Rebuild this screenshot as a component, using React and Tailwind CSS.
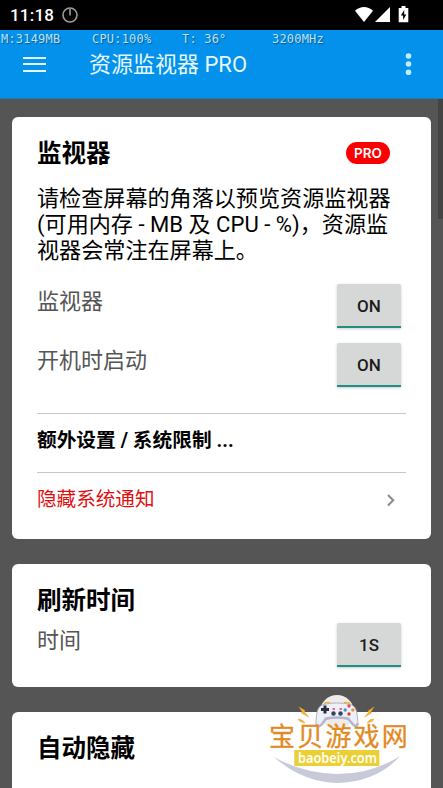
const StatusBar = () => {
	return (
		<div className="h-[30px] bg-black flex items-center justify-between pl-[10px] pr-[33px] text-white">
			<div className="flex items-center gap-[8px]">
				<span className="text-[17px] leading-[30px] font-medium tracking-[0.2px] w-[44px] whitespace-nowrap">11:18</span>
				<svg width="16" height="16" viewBox="0 0 16 16" fill="none" stroke="#a09c98" strokeWidth="1.6">
					<circle cx="8" cy="8" r="7" />
					<path d="M8 2v6.5" />
				</svg>
			</div>
			<svg width="56" height="18" viewBox="0 0 56 18" fill="#fff">
				<path d="M1 4.7C6.500 -.2 13.500 -.2 19 4.700L10 16z" />
				<path d="M36 1v15H21z" />
				<path d="M47.500 0h4v2h2.800v14.200h-9.600V2h2.800z" />
				<path d="M50.200 4l-3.300 5.500h2.200V14l3.200-5.600h-2.100z" fill="#000" />
			</svg>
		</div>
	);
};

const AppBar = () => {
	return (
		<header className="h-[69px] bg-[#0491eb] border-b border-[#2878aa] flex flex-col">
			{/* Resource readout */}
			<div className="h-[17px] pl-[1px] flex font-['DejaVu_Sans_Mono'] text-[12px] leading-[18px] tracking-[0.2px] text-[#b4e4fb] whitespace-pre [text-shadow:1px_1px_1px_#14568a]">
				<span className="w-[91px]">M:3149MB</span>
				<span className="w-[90px]">CPU:100%</span>
				<span className="w-[90px]">T: 36°</span>
				<span>3200MHz</span>
			</div>
			<div className="h-[36px] flex items-center pl-[23px] pr-[30px] text-[#e6f8ff]">
				<svg width="23" height="16" viewBox="0 0 23 16" stroke="currentColor" strokeWidth="2">
					<path d="M0 1h23M0 7h23M0 14h23" />
				</svg>
				<h1 className="ml-[43px] text-[22px] leading-[36px] font-normal">资源监视器 PRO</h1>
				<svg className="ml-auto" width="9" height="24" viewBox="0 0 9 24" fill="#c5edff">
					<circle cx="4.500" cy="3" r="2.800" />
					<circle cx="4.500" cy="11" r="2.800" />
					<circle cx="4.500" cy="19.300" r="2.800" />
				</svg>
			</div>
		</header>
	);
};

const ToggleButton = ({ children }) => {
	return (
		<button className="w-[64px] h-[44px] mt-px rounded-t-[2px] bg-[#d6d8d7] border-b-[2px] border-[#1e8f80] pt-[3px] text-[17px] font-medium text-[#1c1c1c] shadow-[0_1px_3px_rgba(0,0,0,0.2)]">
			{children}
		</button>
	);
};

const SettingRow = ({ label, value }) => {
	return (
		<div className="h-[59px] flex justify-between items-start pr-[5px]">
			<span className="text-[22px] leading-[37px] text-[#555]">{label}</span>
			<ToggleButton>{value}</ToggleButton>
		</div>
	);
};

const Card = ({ className, children }) => {
	return <section className={"bg-white rounded-[6px] px-[25px] overflow-hidden " + className}>{children}</section>;
};

const CardTitle = ({ children }) => {
	return <h2 className="pt-px text-[24.500px] leading-[36px] font-bold text-black">{children}</h2>;
};

const Watermark = () => {
	return (
		<svg className="absolute left-[262px] top-[685px]" width="160" height="103" viewBox="0 0 160 103">
			<path d="M12 72Q40 97 75 98Q115 97 138 71Q110 89 75 89Q40 88 12 72z" fill="#c9cad9" />
			{/* Gamepad */}
			<circle cx="75" cy="27" r="17" fill="#eeece8" />
			<path
				d="M62 19.500C69 17.500 80 17.500 88 19.500C94 20.500 95.500 27 96 40C95 44 91 41 87 34.500Q75 31 64 34.500C60 41 57 44 54 40C54 27 56 20.500 62 19.500z"
				fill="#efeff7"
				stroke="#aeb1c8"
				strokeWidth="1"
			/>
			<path d="M55 39Q56 43.500 60 39L64 33.500Q75 31.500 86 33.500L91 39.500Q95 43 95.500 38" fill="none" stroke="#b4b7ce" strokeWidth="2.500" />
			<path d="M62 18.500q3-1.500 6-.7M82 17.800q3-.8 6 .7" stroke="#edb63e" strokeWidth="1.500" fill="none" />
			<path d="M63 20.500v8M59 24.500h8" stroke="#2b2d42" strokeWidth="3" />
			<circle cx="87" cy="21" r="1.700" fill="#e44c5c" />
			<circle cx="83.200" cy="25" r="1.700" fill="#3b9cc7" />
			<circle cx="90.800" cy="25" r="1.700" fill="#e9913d" />
			<circle cx="87" cy="29" r="1.700" fill="#c9433e" />
			<circle cx="71.500" cy="28.500" r="2.200" fill="#30465e" />
			<circle cx="78.500" cy="28.500" r="2.200" fill="#30465e" />
			<path d="M70.500 24h2.500M77.500 24h2.500" stroke="#dc455b" strokeWidth="1.500" />
			{/* Sparks */}
			<g fill="#f2b632" stroke="#e39a2c" strokeWidth=".5">
				<path d="M37 22l6 3.500-.5 1.500 4 5-7-4 .5-1.500z" />
				<path d="M36 34l4 1 3 3-5-1.500z" />
				<path d="M112 22l-6 4 .5 1.500-4 4.500 7-4-.5-1.500z" />
				<path d="M112 34l-4 .8-3 3 5-1.300z" />
			</g>
			<text
				x="7"
				y="61"
				fontFamily="'Noto Sans CJK SC', sans-serif"
				fontSize="26"
				letterSpacing="2.200"
				fill="#e28a22"
				stroke="#e28a22"
				strokeWidth=".3"
			>
				宝贝游戏网
			</text>
			<rect x="32.300" y="65" width="85" height="16" fill="#ebcf36" />
			<text
				x="36"
				y="77.500"
				fontFamily="'Noto Sans', sans-serif"
				fontSize="14"
				fontWeight="600"
				textLength="79"
				lengthAdjust="spacingAndGlyphs"
				fill="#fffff4"
			>
				baobeiy.com
			</text>
		</svg>
	);
};

const App = () => {
	return (
		<main className="relative w-[443px] h-[788px] overflow-hidden flex flex-col bg-[#555] font-[Roboto,'Noto_Sans_CJK_SC',sans-serif]">
			<StatusBar />
			<AppBar />
			<div className="flex-1 min-h-0 flex justify-between pl-[12px]">
				<div className="w-[419px] pt-[18px] flex flex-col gap-[25px]">
					<Card className="h-[422px] shrink-0 pt-[18px]">
						<div className="flex justify-between items-center pr-[16px]">
							<CardTitle>监视器</CardTitle>
							<span className="w-[44px] h-[22px] mb-px rounded-full bg-[#fb0000] text-white text-center font-[Inter] text-[13.500px] leading-[22px] font-semibold">
								PRO
							</span>
						</div>
						<p className="mt-[13px] text-[22.100px] leading-[26px] text-black whitespace-nowrap">
							请检查屏幕的角落以预览资源监视器
							<br />
							(可用内存 - MB 及 CPU - %)，资源监
							<br />
							视器会常注在屏幕上。
						</p>
						<div className="mt-[20px]">
							<SettingRow label="监视器" value="ON" />
							<SettingRow label="开机时启动" value="ON" />
						</div>
						<h3 className="mt-[12px] h-[59px] border-t border-[#c8c8c8] text-[19.700px] leading-[54px] font-bold text-black">
							额外设置 / 系统限制 ...
						</h3>
						<div className="h-[54px] border-t border-[#c8c8c8] flex items-center justify-between pr-[10px] text-[19.600px] text-[#e01010]">
							<span>隐藏系统通知</span>
							<svg width="10" height="14" viewBox="0 0 10 14" fill="none" stroke="#8a8a8a" strokeWidth="2">
								<path d="M2 2l5.200 5.200L2 12.500" />
							</svg>
						</div>
					</Card>
					<Card className="h-[123px] shrink-0 pt-[18px]">
						<CardTitle>刷新时间</CardTitle>
						<div className="mt-[3px]">
							<SettingRow label="时间" value="1S" />
						</div>
					</Card>
					<Card className="h-[100px] shrink-0 pt-[18px]">
						<CardTitle>自动隐藏</CardTitle>
					</Card>
				</div>
				{/* Scrollbar thumb */}
				<div className="w-[5px] h-[120px] bg-[#444]" />
			</div>
			<Watermark />
		</main>
	);
};

export default App;
